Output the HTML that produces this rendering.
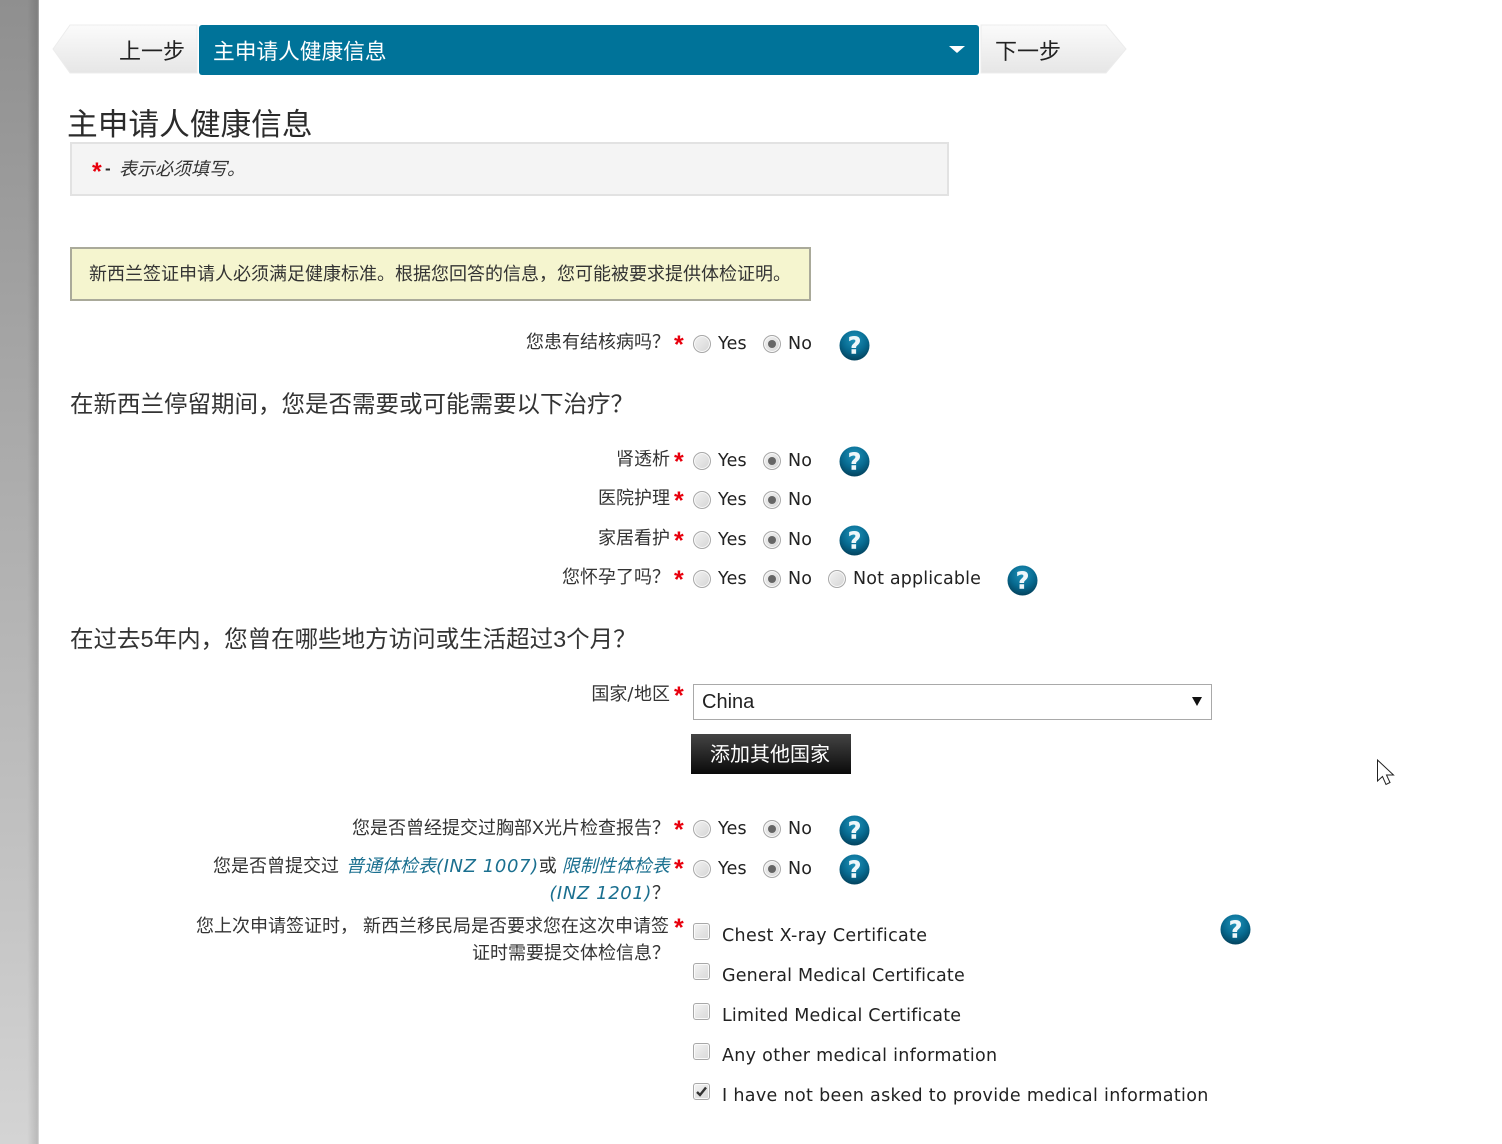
<!DOCTYPE html>
<html><head><meta charset="utf-8"><style>
html,body{margin:0;padding:0;background:#fff}
body{position:relative;width:1502px;height:1144px;overflow:hidden;font-family:"Liberation Sans","Noto Sans CJK SC",sans-serif;color:#2b2b2b}
.a{position:absolute;white-space:nowrap;line-height:1}
.l{position:absolute;white-space:nowrap;line-height:1;font-size:18px;text-align:right;color:#333}
.s{position:absolute;color:#e8000d;font-size:25px;line-height:1;font-family:"Liberation Sans",sans-serif;font-weight:700;margin-left:1px}
.v{position:absolute;white-space:nowrap;line-height:1;font-family:"DejaVu Sans",sans-serif;font-size:17.5px;color:#222;letter-spacing:.2px;margin-top:1px}
.k{letter-spacing:.33px;margin-top:2px}
.r{position:absolute;width:16px;height:16px;border-radius:50%;border:1px solid #a8a8a8;background:linear-gradient(135deg,#f2f2f2,#d5d5d5);box-shadow:inset 0 0 0 1px #fafafa}
.r.on::after{content:"";position:absolute;left:4px;top:4px;width:8px;height:8px;border-radius:50%;background:#666}
.c{position:absolute;width:15px;height:15px;border-radius:3px;border:1px solid #a8a8a8;background:linear-gradient(135deg,#f4f4f4,#d8d8d8);box-shadow:inset 0 0 0 1px #fafafa}
.h{position:absolute;width:31px;height:31px}
i.link{color:#1a6f8f}
.e{font-family:"DejaVu Sans",sans-serif;font-size:18px;letter-spacing:.6px}
.h1{font-size:23.5px;color:#333}
</style></head><body>
<div style="position:absolute;left:0;top:0;width:39px;height:1144px;background:linear-gradient(90deg,rgba(0,0,0,0) 70%,rgba(0,0,0,.12) 96%,rgba(255,255,255,.3) 100%),linear-gradient(180deg,#8f8f8f 0,#a8a8a8 35%,#c2c2c2 75%,#d4d4d4 100%)"></div>

<svg width="0" height="0" style="position:absolute"><defs>
<radialGradient id="hg" cx="50%" cy="30%" r="75%"><stop offset="0" stop-color="#1f93ba"/><stop offset=".55" stop-color="#076a90"/><stop offset="1" stop-color="#033c55"/></radialGradient>
<linearGradient id="ng" x1="0" y1="0" x2="0" y2="1"><stop offset="0" stop-color="#fbfbfb"/><stop offset="1" stop-color="#e6e6e6"/></linearGradient>
<symbol id="help" viewBox="0 0 31 31"><circle cx="15.5" cy="15.5" r="15" fill="url(#hg)"/><text x="15.5" y="23.5" text-anchor="middle" font-size="23" font-weight="700" font-family="DejaVu Sans, sans-serif" fill="#eef7fa" stroke="#eef7fa" stroke-width=".5">?</text></symbol>
</defs></svg>

<!-- nav -->
<svg style="position:absolute;left:50px;top:23px" width="150" height="52"><polygon points="3,26 20,2 147,2 147,50 20,50" fill="url(#ng)" stroke="#ececec" stroke-width="1"/></svg>
<div class="a" style="left:119px;top:41px;font-size:22px;color:#222">上一步</div>
<div style="position:absolute;left:199px;top:25px;width:780px;height:50px;background:#007399;border-radius:3px"></div>
<div class="a" style="left:213px;top:41px;font-size:21.7px;color:#fff">主申请人健康信息</div>
<div style="position:absolute;left:949px;top:46px;width:0;height:0;border-left:8px solid transparent;border-right:8px solid transparent;border-top:7px solid #fff"></div>
<svg style="position:absolute;left:980px;top:23px" width="150" height="52"><polygon points="1,2 126,2 146,26 126,50 1,50" fill="url(#ng)" stroke="#ececec" stroke-width="1"/></svg>
<div class="a" style="left:995px;top:41px;font-size:22px;color:#222">下一步</div>

<div class="a" style="left:67px;top:110px;font-size:30.7px;color:#2b2b2b">主申请人健康信息</div>

<div style="position:absolute;left:70px;top:142px;width:875px;height:50px;background:#f4f4f4;border:2px solid #e2e2e2"></div>
<div class="s" style="left:91px;top:160px;">*</div>
<div class="a" style="left:105px;top:160px;font-size:17px;font-weight:700">-</div>
<div class="a" style="left:119px;top:160px;font-size:18px;font-style:italic;color:#333">表示必须填写。</div>

<div style="position:absolute;left:70px;top:247px;width:737px;height:50px;background:#f5f5cf;border:2px solid #aaaa9a"></div>
<div class="a" style="left:89px;top:265px;font-size:18px;color:#333">新西兰签证申请人必须满足健康标准。根据您回答的信息，您可能被要求提供体检证明。</div>

<!-- Q1 -->
<div class="l" style="right:832px;top:333px">您患有结核病吗？</div><div class="s" style="left:673px;top:333px">*</div>
<div class="r" style="left:693px;top:335px"></div><div class="v" style="left:718px;top:335px">Yes</div>
<div class="r on" style="left:763px;top:335px"></div><div class="v" style="left:788px;top:335px">No</div>
<svg class="h" style="left:839px;top:330px"><use href="#help"/></svg>

<div class="a h1" style="left:70px;top:393px">在新西兰停留期间，您是否需要或可能需要以下治疗？</div>

<div class="l" style="right:832px;top:450px">肾透析</div><div class="s" style="left:673px;top:450px">*</div>
<div class="r" style="left:693px;top:452px"></div><div class="v" style="left:718px;top:452px">Yes</div>
<div class="r on" style="left:763px;top:452px"></div><div class="v" style="left:788px;top:452px">No</div>
<svg class="h" style="left:839px;top:446px"><use href="#help"/></svg>

<div class="l" style="right:832px;top:489px">医院护理</div><div class="s" style="left:673px;top:489px">*</div>
<div class="r" style="left:693px;top:491px"></div><div class="v" style="left:718px;top:491px">Yes</div>
<div class="r on" style="left:763px;top:491px"></div><div class="v" style="left:788px;top:491px">No</div>

<div class="l" style="right:832px;top:529px">家居看护</div><div class="s" style="left:673px;top:529px">*</div>
<div class="r" style="left:693px;top:531px"></div><div class="v" style="left:718px;top:531px">Yes</div>
<div class="r on" style="left:763px;top:531px"></div><div class="v" style="left:788px;top:531px">No</div>
<svg class="h" style="left:839px;top:525px"><use href="#help"/></svg>

<div class="l" style="right:832px;top:568px">您怀孕了吗？</div><div class="s" style="left:673px;top:568px">*</div>
<div class="r" style="left:693px;top:570px"></div><div class="v" style="left:718px;top:570px">Yes</div>
<div class="r on" style="left:763px;top:570px"></div><div class="v" style="left:788px;top:570px">No</div>
<div class="r" style="left:828px;top:570px"></div><div class="v" style="left:853px;top:570px;letter-spacing:.15px">Not applicable</div>
<svg class="h" style="left:1007px;top:565px"><use href="#help"/></svg>

<div class="a h1" style="left:70px;top:628px">在过去5年内，您曾在哪些地方访问或生活超过3个月？</div>

<div class="l" style="right:832px;top:685px">国家<span class="e">/</span>地区</div><div class="s" style="left:674px;top:684px;margin-left:0">*</div>
<div style="position:absolute;left:693px;top:684px;width:517px;height:34px;border:1px solid #a9a9a9;background:#fff"></div>
<div class="a" style="left:702px;top:692px;font-size:20px;color:#222">China</div>
<div style="position:absolute;left:1192px;top:697px;width:0;height:0;border-left:5px solid transparent;border-right:5px solid transparent;border-top:9px solid #111"></div>
<div style="position:absolute;left:691px;top:734px;width:160px;height:40px;background:linear-gradient(180deg,#444 0,#0a0a0a 100%)"></div>
<div class="a" style="left:710px;top:745px;font-size:20px;color:#fff">添加其他国家</div>

<div class="l" style="right:832px;top:819px">您是否曾经提交过胸部X光片检查报告？</div><div class="s" style="left:673px;top:818px">*</div>
<div class="r" style="left:693px;top:820px"></div><div class="v" style="left:718px;top:820px">Yes</div>
<div class="r on" style="left:763px;top:820px"></div><div class="v" style="left:788px;top:820px">No</div>
<svg class="h" style="left:839px;top:815px"><use href="#help"/></svg>

<div class="l" style="left:213px;top:857px">您是否曾提交过 <i class="link" style="margin-left:2px">普通体检表<span class="e">(INZ 1007)</span></i>或 <i class="link">限制性体检表</i></div><div class="s" style="left:673px;top:857px">*</div>
<div class="l" style="right:832px;top:884px"><i class="link e">(INZ 1201)</i>？</div>
<div class="r" style="left:693px;top:860px"></div><div class="v" style="left:718px;top:860px">Yes</div>
<div class="r on" style="left:763px;top:860px"></div><div class="v" style="left:788px;top:860px">No</div>
<svg class="h" style="left:839px;top:854px"><use href="#help"/></svg>

<div class="l" style="left:196px;top:917px">您上次申请签证时， 新西兰移民局是否要求您在这次申请签</div><div class="s" style="left:673px;top:916px">*</div>
<div class="l" style="right:832px;top:944px">证时需要提交体检信息？</div>

<div class="c" style="left:693px;top:923px"></div><div class="v k" style="left:722px;top:926px">Chest X-ray Certificate</div>
<svg class="h" style="left:1220px;top:914px"><use href="#help"/></svg>
<div class="c" style="left:693px;top:963px"></div><div class="v k" style="left:722px;top:966px;letter-spacing:.18px">General Medical Certificate</div>
<div class="c" style="left:693px;top:1003px"></div><div class="v k" style="left:722px;top:1006px;letter-spacing:.18px">Limited Medical Certificate</div>
<div class="c" style="left:693px;top:1043px"></div><div class="v k" style="left:722px;top:1046px;letter-spacing:.3px">Any other medical information</div>
<div class="c" style="left:693px;top:1083px"><svg width="15" height="15" style="position:absolute;left:0;top:0"><path d="M3 8 L6 11 L12 3.5" fill="none" stroke="#333" stroke-width="2.4"/></svg></div><div class="v k" style="left:722px;top:1086px">I have not been asked to provide medical information</div>

<svg style="position:absolute;left:1375px;top:758px" width="22" height="30"><path d="M2.5 2 L2.5 23 L7.5 18.5 L11 26.5 L15 24.5 L11.5 17 L18.5 17 Z" fill="#fff" stroke="#222" stroke-width="1"/></svg>
</body></html>
